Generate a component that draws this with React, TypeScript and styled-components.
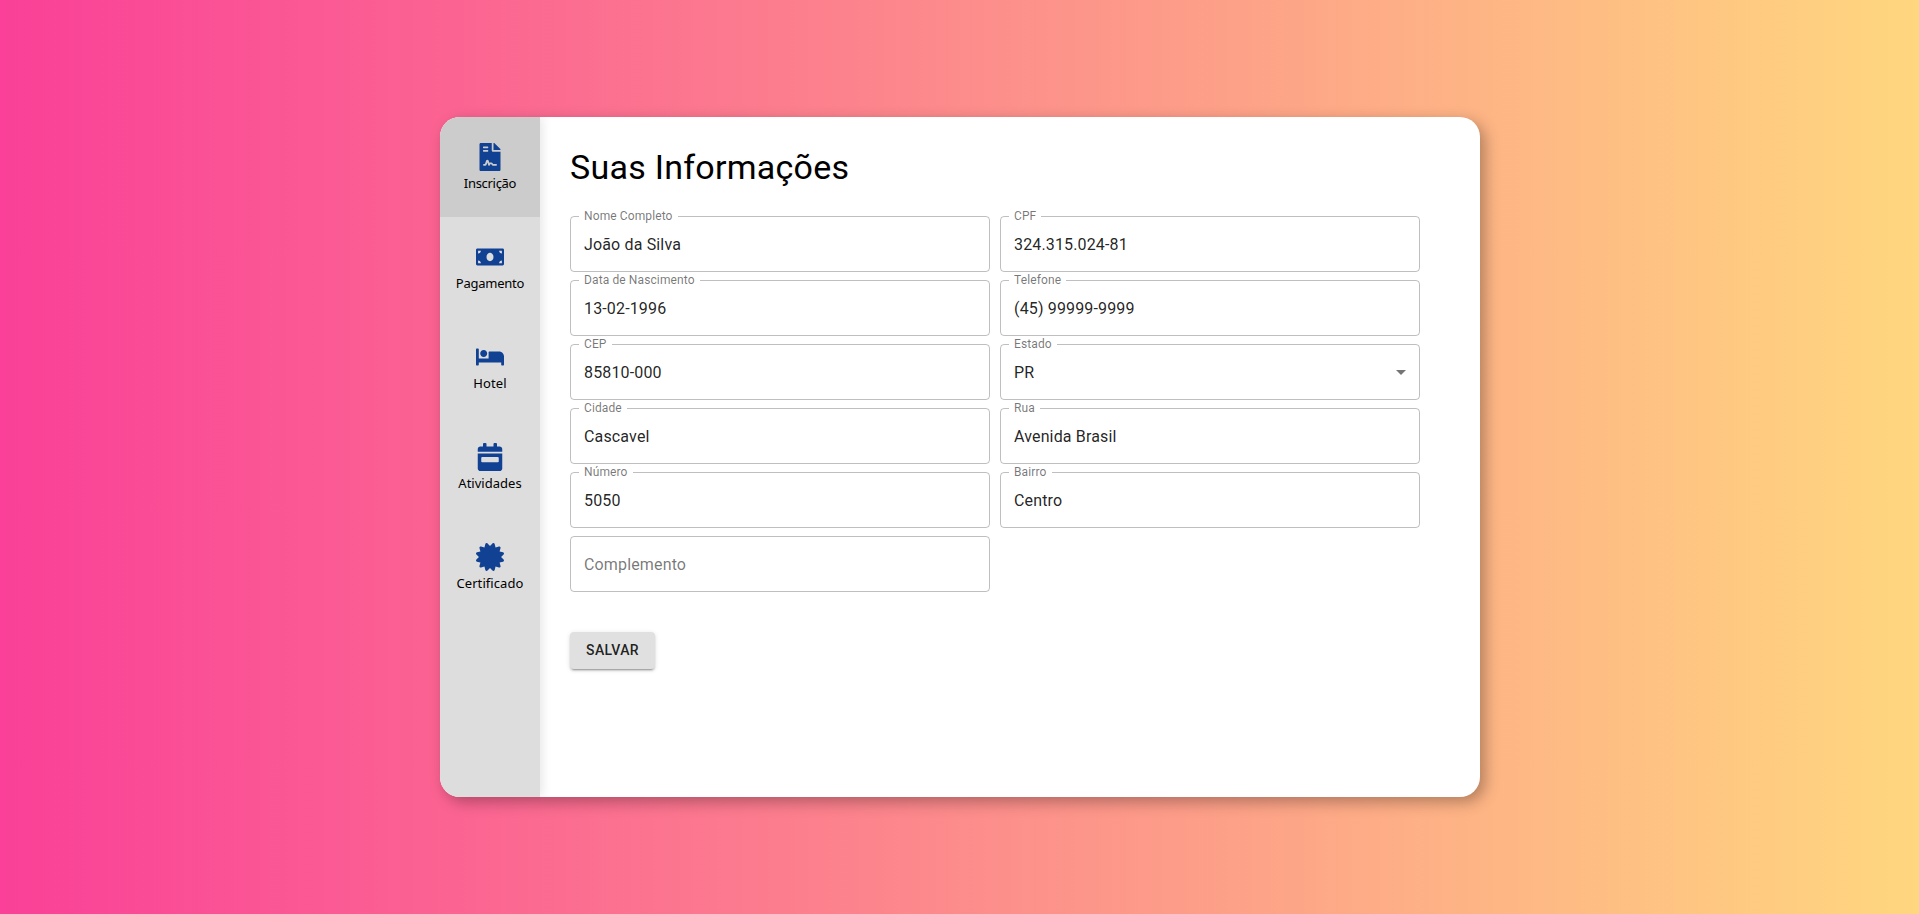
import React from "react";
import styled, { createGlobalStyle } from "styled-components";
import { FaFileContract, FaMoneyBill, FaBed, FaCalendarWeek, FaCertificate } from "react-icons/fa";
import type { IconType } from "react-icons";

const GlobalStyle = createGlobalStyle`
  * { box-sizing: border-box; }
  body { margin: 0; font-family: Roboto, sans-serif; color: #000; }
`;

const Page = styled.main`
  height: 100vh;
  padding-left: 1px;
  display: flex;
  align-items: center;
  justify-content: center;
  background: linear-gradient(to right, #fa4098, #ffd77f);
`;

const Card = styled.div`
  width: 1040px;
  height: 680px;
  display: flex;
  border-radius: 20px;
  overflow: hidden;
  background: #fff;
  box-shadow: 5px 5px 15px rgba(0, 0, 0, 0.3);
`;

const Sidebar = styled.nav`
  width: 100px;
  display: flex;
  flex-direction: column;
  background: #ddd;
  box-shadow: 2px 0 10px rgba(0, 0, 0, 0.1);
`;

const NavItem = styled.button<{ $active?: boolean }>`
  height: 100px;
  padding: 0;
  border: 0;
  display: flex;
  flex-direction: column;
  align-items: center;
  justify-content: center;
  background: ${(p) => (p.$active ? "#ccc" : "transparent")};
  cursor: pointer;
  svg {
    width: 28px;
    height: 28px;
    fill: #114193;
  }
`;

const NavLabel = styled.span<{ $tracking: number }>`
  margin-top: 4px;
  font: 13px/17px "Noto Sans", sans-serif;
  letter-spacing: ${(p) => p.$tracking}px;
  color: #000;
`;

const Content = styled.section`
  flex: 1;
  padding: 29px 60px 30px 30px;
`;

const Title = styled.h1`
  margin: 0 0 28px;
  font-size: 34px;
  font-weight: 400;
  line-height: 42px;
  letter-spacing: 0.25px;
`;

const Form = styled.form`
  display: grid;
  grid-template-columns: 420px 420px;
  gap: 8px 10px;
`;

const Field = styled.div`
  position: relative;
  height: 56px;
  display: flex;
  align-items: center;
  padding: 0 14px;
  font-size: 16px;
  letter-spacing: 0.15px;
`;

const FieldLabel = styled.label`
  position: absolute;
  top: 0;
  left: 0;
  line-height: 1;
  color: rgba(0, 0, 0, 0.54);
  transform-origin: top left;
  transform: translate(14px, -6px) scale(0.75);
  white-space: nowrap;
`;

const Outline = styled.fieldset<{ $notched: boolean }>`
  position: absolute;
  inset: ${(p) => (p.$notched ? "-5px" : "0")} 0 0;
  margin: 0;
  padding: 0 8px;
  border: 1px solid rgba(0, 0, 0, 0.25);
  border-radius: 4px;
  pointer-events: none;
`;

const Notch = styled.legend`
  height: 11px;
  padding: 0 5px;
  font-size: 12px;
  visibility: hidden;
`;

const Input = styled.input`
  width: 100%;
  height: 19px;
  padding: 0;
  border: 0;
  outline: 0;
  background: none;
  font: inherit;
  letter-spacing: inherit;
  color: rgba(0, 0, 0, 0.87);
  &::placeholder {
    color: rgba(0, 0, 0, 0.54);
    opacity: 1;
  }
`;

const Arrow = styled.svg`
  flex: none;
  width: 24px;
  height: 24px;
  margin-right: -7px;
  fill: rgba(0, 0, 0, 0.54);
`;

const SaveButton = styled.button`
  justify-self: start;
  grid-column: 1;
  margin-top: 32px;
  height: 37px;
  padding: 0 16px 1px;
  border: 0;
  border-radius: 4px;
  background: #e0e0e0;
  color: rgba(0, 0, 0, 0.87);
  font: 500 14px/24px Roboto, sans-serif;
  letter-spacing: 0.4px;
  text-transform: uppercase;
  box-shadow: 0 3px 1px -2px rgba(0, 0, 0, 0.2), 0 2px 2px 0 rgba(0, 0, 0, 0.14),
    0 1px 5px 0 rgba(0, 0, 0, 0.12);
`;

const navItems: { label: string; icon: IconType; tracking: number }[] = [
  { label: "Inscrição", icon: FaFileContract, tracking: -0.3 },
  { label: "Pagamento", icon: FaMoneyBill, tracking: -0.25 },
  { label: "Hotel", icon: FaBed, tracking: 0.1 },
  { label: "Atividades", icon: FaCalendarWeek, tracking: 0.02 },
  { label: "Certificado", icon: FaCertificate, tracking: 0.08 },
];

const fields: { label: string; value?: string; select?: boolean }[] = [
  { label: "Nome Completo", value: "João da Silva" },
  { label: "CPF", value: "324.315.024-81" },
  { label: "Data de Nascimento", value: "13-02-1996" },
  { label: "Telefone", value: "(45) 99999-9999" },
  { label: "CEP", value: "85810-000" },
  { label: "Estado", value: "PR", select: true },
  { label: "Cidade", value: "Cascavel" },
  { label: "Rua", value: "Avenida Brasil" },
  { label: "Número", value: "5050" },
  { label: "Bairro", value: "Centro" },
  { label: "Complemento" },
];

export default function App() {
  return (
    <>
      <GlobalStyle />
      <Page>
        <Card>
          <Sidebar>
            {navItems.map(({ label, icon: Icon, tracking }, i) => (
              <NavItem key={label} $active={i === 0}>
                <Icon />
                <NavLabel $tracking={tracking}>{label}</NavLabel>
              </NavItem>
            ))}
          </Sidebar>
          <Content>
            <Title>Suas Informações</Title>
            <Form>
              {fields.map(({ label, value, select }) => (
                <Field key={label}>
                  {value && <FieldLabel>{label}</FieldLabel>}
                  <Input
                    aria-label={label}
                    defaultValue={value}
                    placeholder={value ? undefined : label}
                    readOnly={select}
                  />
                  {select && (
                    <Arrow viewBox="0 0 24 24">
                      <path d="M7 10l5 5 5-5z" />
                    </Arrow>
                  )}
                  <Outline aria-hidden $notched={Boolean(value)}>
                    {value && <Notch>{label}</Notch>}
                  </Outline>
                </Field>
              ))}
              <SaveButton type="button">Salvar</SaveButton>
            </Form>
          </Content>
        </Card>
      </Page>
    </>
  );
}
